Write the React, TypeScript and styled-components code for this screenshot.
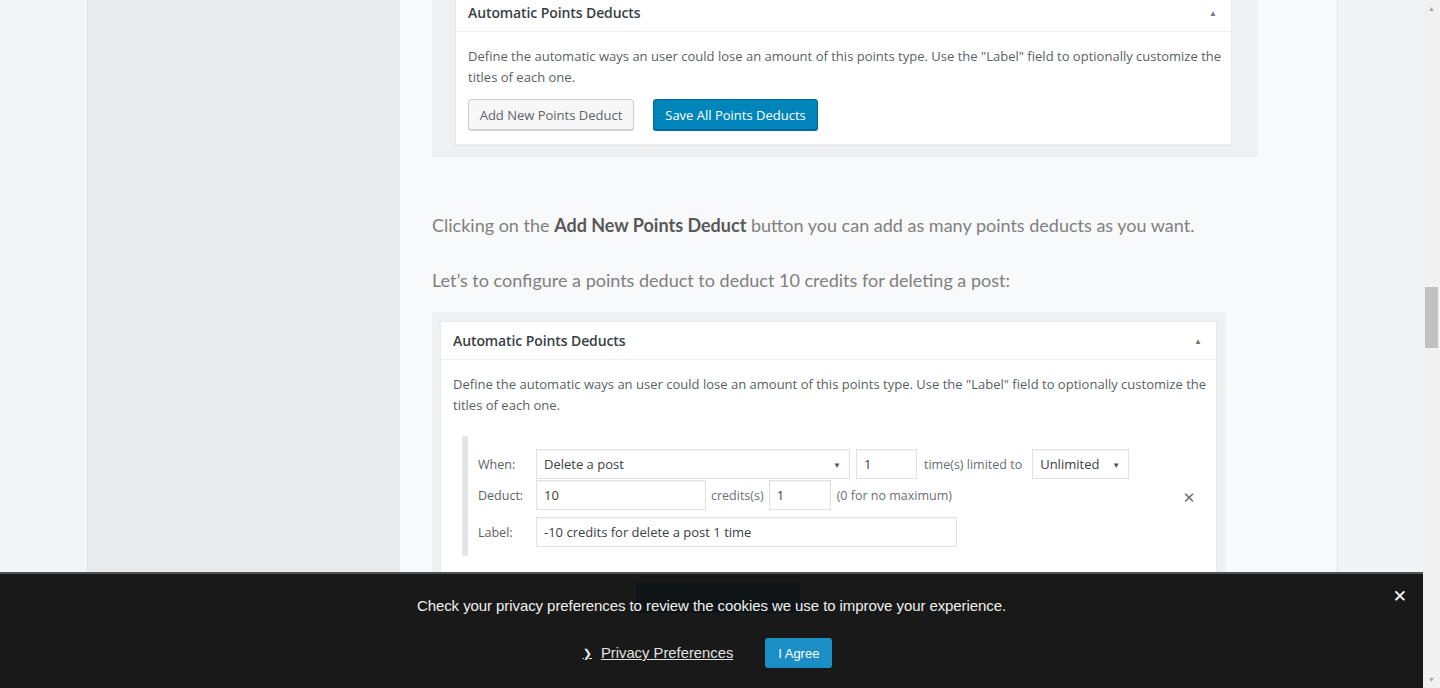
import React from "react";
import styled, { createGlobalStyle } from "styled-components";

const Global = createGlobalStyle`
  *, *::before, *::after { box-sizing: border-box; }
  html, body { margin: 0; padding: 0; width: 1440px; height: 688px; overflow: hidden; background: #f3f4f6; }
  #root { width: 1440px; height: 688px; }
`;

const Page = styled.div`
  display: flex;
  width: 1440px;
  height: 688px;
  overflow: hidden;
  font-family: "Open Sans", "Liberation Sans", sans-serif;
`;

const Gutter = styled.div<{ $w: number; $bg: string; $border?: string }>`
  flex: 0 0 ${(p) => p.$w}px;
  height: 100%;
  background: ${(p) => p.$bg};
  border-left: ${(p) => (p.$border ? `1px solid ${p.$border}` : "none")};
`;

const Main = styled.main`
  flex: 0 0 937px;
  height: 100%;
  overflow: hidden;
  background: #f8f9fa;
  padding-left: 32px;
  display: flex;
  flex-direction: column;
  align-items: flex-start;
`;

const Figure = styled.div<{ $mt: number; $pad: string; $w: number }>`
  margin-top: ${(p) => p.$mt}px;
  width: ${(p) => p.$w}px;
  padding: ${(p) => p.$pad};
  background: #eff0f2;
  flex-shrink: 0;
`;

const Panel = styled.div`
  width: 777px;
  background: #fff;
  border: 1px solid #e9eaec;
  box-shadow: 0 1px 2px rgba(0, 0, 0, 0.05);
`;

const PanelHead = styled.div`
  height: 38px;
  display: flex;
  align-items: center;
  justify-content: space-between;
  padding: 0 14px 0 12px;
  border-bottom: 1px solid #eeeeee;
`;

const PanelTitle = styled.span`
  font-size: 14px;
  font-weight: 600;
  color: #3a3f44;
  letter-spacing: -0.1px;
`;

const Toggle = styled.span`
  font-size: 8px;
  color: #72777c;
`;

const PanelBody = styled.div<{ $pb: number }>`
  padding: 14px 12px ${(p) => p.$pb}px 12px;
`;

const Desc = styled.p`
  margin: 0;
  font-size: 13px;
  line-height: 20.5px;
  color: #5a5f64;
  white-space: nowrap;
  letter-spacing: 0.01px;
`;

const ButtonRow = styled.div`
  display: flex;
  gap: 19px;
  margin-top: 12px;
`;

const WpButton = styled.button<{ $primary?: boolean }>`
  height: 31px;
  padding: 0 10px;
  border-radius: 3px;
  font-family: "Open Sans", "Liberation Sans", sans-serif;
  font-size: 13px;
  cursor: pointer;
  width: ${(p) => (p.$primary ? 165 : 166)}px;
  background: ${(p) => (p.$primary ? "#0085ba" : "#f7f7f7")};
  color: ${(p) => (p.$primary ? "#ffffff" : "#606468")};
  border: 1px solid ${(p) => (p.$primary ? "#006799" : "#cccccc")};
  box-shadow: 0 1px 0 ${(p) => (p.$primary ? "#006799" : "#d6d6d6")};
`;

const Para = styled.p<{ $mt: number }>`
  margin: ${(p) => p.$mt}px 0 0 0;
  font-family: Lato, "Open Sans", sans-serif;
  font-size: 18px;
  line-height: 26px;
  color: #808080;
  white-space: nowrap;
  strong {
    font-weight: 700;
    color: #585858;
  }
`;

const FormBox = styled.div`
  margin: 21px 0 0 9px;
  border-left: 6px solid #e4e5e7;
  padding: 13px 7px 9px 10px;
  display: flex;
  align-items: center;
`;

const Fields = styled.div`
  flex: 1;
  display: flex;
  flex-direction: column;
`;

const Row = styled.div<{ $mt: number }>`
  display: flex;
  align-items: center;
  height: 30px;
  margin-top: ${(p) => p.$mt}px;
`;

const Label = styled.span`
  width: 58px;
  font-size: 12.5px;
  color: #5d6166;
`;

const Inline = styled.span<{ $ml: number }>`
  margin-left: ${(p) => p.$ml}px;
  font-size: 12.5px;
  color: #6b6f74;
  white-space: nowrap;
`;

const Field = styled.div<{ $w: number; $ml?: number }>`
  width: ${(p) => p.$w}px;
  height: 30px;
  margin-left: ${(p) => p.$ml ?? 0}px;
  border: 1px solid #e1e2e4;
  box-shadow: inset 0 1px 2px rgba(0, 0, 0, 0.05);
  background: #fff;
  display: flex;
  align-items: center;
  justify-content: space-between;
  padding: 0 8px 0 7px;
  font-size: 13px;
  color: #3c4045;
`;

const Caret = styled.span`
  font-size: 8px;
  color: #555;
`;

const Remove = styled.span`
  width: 16px;
  font-size: 15px;
  color: #6d7074;
  text-align: center;
  font-family: "DejaVu Sans", sans-serif;
`;

const CookieBar = styled.div`
  position: fixed;
  left: 0;
  bottom: 0;
  width: 1423px;
  height: 116px;
  background: #191919;
  border-top: 2px solid #505152;
  display: flex;
  flex-direction: column;
  align-items: center;
  font-family: "Liberation Sans", Arial, sans-serif;
`;

const Backdrop = styled.div`
  position: absolute;
  left: 636px;
  top: 9px;
  width: 164px;
  height: 30px;
  background: #0f1416;
`;

const CookieText = styled.p`
  position: relative;
  margin: 23px 0 0 0;
  font-size: 15px;
  line-height: 18px;
  color: #f0f0f0;
  letter-spacing: -0.08px;
`;

const CookieActions = styled.div`
  display: flex;
  align-items: center;
  margin-top: 23px;
  margin-left: -8px;
`;

const PrefLink = styled.a`
  display: flex;
  align-items: center;
  gap: 9px;
  font-size: 14.8px;
  color: #e2e2e2;
  span {
    text-decoration: underline;
  }
`;

const Chevron = styled.span`
  font-family: "DejaVu Sans", sans-serif;
  font-size: 11px;
  color: #eee;
`;

const AgreeButton = styled.button`
  margin-left: 32px;
  width: 67px;
  height: 30px;
  border: none;
  border-radius: 3px;
  background: #1a8ec5;
  color: #fff;
  font-family: "Liberation Sans", Arial, sans-serif;
  font-size: 13px;
`;

const Close = styled.span`
  position: absolute;
  right: 16px;
  top: 12px;
  color: #fff;
  font-size: 17px;
  font-weight: 700;
  font-family: "DejaVu Sans", sans-serif;
`;

const Scrollbar = styled.div`
  flex: 0 0 17px;
  height: 100%;
  background: #f1f1f1;
  display: flex;
  flex-direction: column;
  align-items: center;
`;

const ScrollArrow = styled.div`
  height: 17px;
  width: 17px;
  display: flex;
  align-items: center;
  justify-content: center;
  font-size: 7px;
  color: #a3a3a3;
`;

const Track = styled.div`
  flex: 1;
  width: 100%;
  padding: 270px 2px 0 2px;
`;

const Thumb = styled.div`
  height: 61px;
  background: #c1c1c1;
`;

function PanelHeader() {
  return (
    <PanelHead>
      <PanelTitle>Automatic Points Deducts</PanelTitle>
      <Toggle>▲</Toggle>
    </PanelHead>
  );
}

function Description() {
  return (
    <>
      <Desc>
        Define the automatic ways an user could lose an amount of this points type. Use the "Label" field to
        optionally customize the
      </Desc>
      <Desc>titles of each one.</Desc>
    </>
  );
}

export default function App() {
  return (
    <>
      <Global />
      <Page>
        <Gutter $w={87} $bg="#f3f4f6" />
        <Gutter $w={313} $bg="#e8ebee" $border="#dfe2e5" />
        <Main>
          <Figure $mt={-9} $w={826} $pad="2px 26px 12px 23px">
            <Panel>
              <PanelHeader />
              <PanelBody $pb={14}>
                <Description />
                <ButtonRow>
                  <WpButton>Add New Points Deduct</WpButton>
                  <WpButton $primary>Save All Points Deducts</WpButton>
                </ButtonRow>
              </PanelBody>
            </Panel>
          </Figure>
          <Para $mt={55}>
            Clicking on the <strong>Add New Points Deduct</strong> button you can add as many points deducts as you
            want.
          </Para>
          <Para $mt={29}>Let’s to configure a points deduct to deduct 10 credits for deleting a post:</Para>
          <Figure $mt={19} $w={794} $pad="9px 9px 0 8px">
            <Panel>
              <PanelHeader />
              <PanelBody $pb={60}>
                <Description />
                <FormBox>
                  <Fields>
                    <Row $mt={0}>
                      <Label>When:</Label>
                      <Field $w={314}>
                        Delete a post <Caret>▼</Caret>
                      </Field>
                      <Field $w={61} $ml={6}>
                        1
                      </Field>
                      <Inline $ml={7}>time(s) limited to</Inline>
                      <Field $w={97} $ml={10}>
                        Unlimited <Caret>▼</Caret>
                      </Field>
                    </Row>
                    <Row $mt={1}>
                      <Label>Deduct:</Label>
                      <Field $w={170}>10</Field>
                      <Inline $ml={5}>credits(s)</Inline>
                      <Field $w={62} $ml={5}>
                        1
                      </Field>
                      <Inline $ml={6}>(0 for no maximum)</Inline>
                    </Row>
                    <Row $mt={7}>
                      <Label>Label:</Label>
                      <Field $w={421}>-10 credits for delete a post 1 time</Field>
                    </Row>
                  </Fields>
                  <Remove>✕</Remove>
                </FormBox>
              </PanelBody>
            </Panel>
          </Figure>
        </Main>
        <Gutter $w={86} $bg="#f2f3f5" $border="#e2e4e7" />
        <Scrollbar>
          <ScrollArrow>▲</ScrollArrow>
          <Track>
            <Thumb />
          </Track>
          <ScrollArrow>▼</ScrollArrow>
        </Scrollbar>
      </Page>
      <CookieBar>
        <Backdrop />
        <CookieText>Check your privacy preferences to review the cookies we use to improve your experience.</CookieText>
        <CookieActions>
          <PrefLink>
            <Chevron>❯</Chevron>
            <span>Privacy Preferences</span>
          </PrefLink>
          <AgreeButton>I Agree</AgreeButton>
        </CookieActions>
        <Close>✕</Close>
      </CookieBar>
    </>
  );
}
